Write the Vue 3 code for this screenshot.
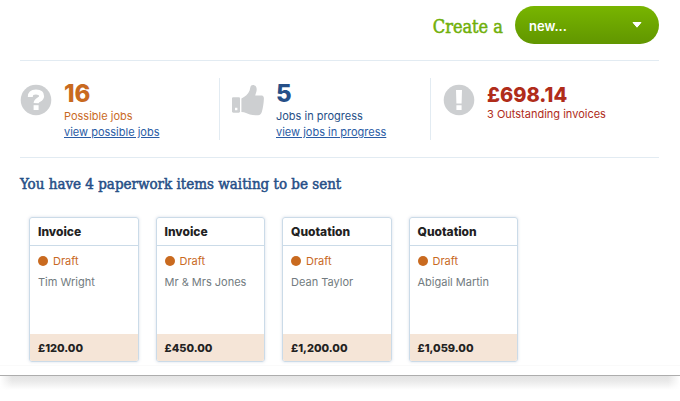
<script setup>
import { ref } from 'vue'

const selected = ref('new')

const stats = [
  { icon: 'question', tone: 'orange', value: '16', label: 'Possible jobs', link: 'view possible jobs' },
  { icon: 'thumb', tone: 'blue', value: '5', label: 'Jobs in progress', link: 'view jobs in progress' },
  { icon: 'alert', tone: 'red', value: '£698.14', label: '3 Outstanding invoices' },
]

const items = [
  { type: 'Invoice', status: 'Draft', client: 'Tim Wright', amount: '£120.00' },
  { type: 'Invoice', status: 'Draft', client: 'Mr & Mrs Jones', amount: '£450.00' },
  { type: 'Quotation', status: 'Draft', client: 'Dean Taylor', amount: '£1,200.00' },
  { type: 'Quotation', status: 'Draft', client: 'Abigail Martin', amount: '£1,059.00' },
]
</script>

<template>
  <main class="panel">
    <header class="create">
      <label class="create-label" for="create-type">Create a</label>
      <div class="picker">
        <select id="create-type" v-model="selected" class="picker-select">
          <option value="new">new...</option>
          <option value="invoice">Invoice</option>
          <option value="quotation">Quotation</option>
        </select>
        <svg class="picker-arrow" viewBox="0 0 10 6" aria-hidden="true">
          <path d="M1 0.5h8L5 5.2z" fill="#fff" stroke="#fff" stroke-linejoin="round" />
        </svg>
      </div>
    </header>

    <section class="stats">
      <article v-for="stat in stats" :key="stat.label" class="stat" :class="[stat.tone, stat.icon]">
        <svg v-if="stat.icon === 'question'" class="icon" viewBox="0 0 32 32" aria-hidden="true">
          <circle cx="16" cy="16" r="15.3" fill="#cdcfd1" />
          <path d="M10.3 13C10.3 9 12.6 8 16 8s5.600 1.300 5.600 4.200c0 3.700-5.300 3.200-5.500 7" fill="none" stroke="#fff" stroke-width="5" />
          <path d="M13.6 21.2h5v4.8h-5z" fill="#fff" />
        </svg>
        <svg v-else-if="stat.icon === 'thumb'" class="icon" viewBox="0 0 32 32" aria-hidden="true">
          <path d="M1.4 13.2h5.4c.7 0 1.2.5 1.2 1.2v13.2c0 .7-.5 1.2-1.2 1.2H1.4c-.8 0-1.4-.5-1.4-1.2V14.4c0-.7.6-1.2 1.4-1.2zM3 23.8v2.4h2.400v-2.400z" fill="#cdcfd1" fill-rule="evenodd" />
          <path d="M9.4 14.6c3.6-1.7 6.9-4.5 8.2-8.1.7-2 .5-3.8 1.6-5C21 0 24.5 1.3 24.7 5c.1 2.5-1 4.7-1.5 6.6h6.5c1.7.2 2.3 1.6 2.2 3.2-.2 4.2-.8 9-2.1 13.1-.6 2-1.7 3.1-3.7 3.3-2.7.2-5.7.1-8.2-.6-2.6-.8-4.8-2.5-8.500-2.600z" fill="#cdcfd1" />
        </svg>
        <svg v-else class="icon" viewBox="0 0 32 32" aria-hidden="true">
          <circle cx="16" cy="16" r="15.3" fill="#cdcfd1" />
          <path d="M13 6h6l-.4 13.6h-5.200zM13.400 21.200h5.200v4.800h-5.200z" fill="#fff" />
        </svg>
        <div class="stat-text">
          <strong class="value">{{ stat.value }}</strong>
          <span class="caption">{{ stat.label }}</span>
          <a v-if="stat.link" class="link" href="#">{{ stat.link }}</a>
        </div>
      </article>
    </section>

    <section class="paperwork">
      <h2 class="title">You have 4 paperwork items waiting to be sent</h2>
      <div class="cards">
        <article v-for="item in items" :key="item.client" class="card">
          <h3 class="card-title">{{ item.type }}</h3>
          <div class="card-body">
            <span class="status"><i class="dot"></i>{{ item.status }}</span>
            <span class="client">{{ item.client }}</span>
          </div>
          <strong class="amount">{{ item.amount }}</strong>
        </article>
      </div>
    </section>
    <div class="panel-foot"></div>
  </main>
  <div class="panel-shadow"></div>
</template>

<style>
body {
  background: #fff;
}
</style>

<style scoped>
* {
  box-sizing: border-box;
}

.panel {
  font-family: Inter, "Liberation Sans", sans-serif;
  font-size: 11px;
  line-height: 16px;
  background: #fff;
  border-bottom: 1px solid #adadad;
}

.panel-shadow {
  height: 14px;
  background:
    linear-gradient(to right, #fff, transparent 12px calc(100% - 12px), #fff),
    linear-gradient(#e4e4e4, #e9e9e9 35%, #fff);
}

.create {
  display: flex;
  align-items: center;
  justify-content: flex-end;
  gap: 12px;
  margin: 0 21px 0 20px;
  padding: 6px 0 16px;
  border-bottom: 1px solid #e2ebf2;
}

.create-label {
  font-family: "DejaVu Serif Condensed", "DejaVu Serif", serif;
  font-size: 18px;
  line-height: 24px;
  padding-top: 4px;
  color: #70b00a;
  -webkit-text-stroke: 0.5px #70b00a;
}

.picker {
  display: grid;
  align-items: center;
  width: 144px;
}

.picker-select {
  grid-area: 1 / 1;
  width: 100%;
  height: 38px;
  padding: 2px 32px 0 14px;
  appearance: none;
  border: 0;
  border-radius: 19px;
  background: linear-gradient(#78b500, #619600);
  color: #fff;
  font: 600 13px/20px Inter, "Liberation Sans", sans-serif;
}

.picker-arrow {
  grid-area: 1 / 1;
  justify-self: end;
  width: 10px;
  height: 6px;
  margin-right: 17px;
  pointer-events: none;
}

.stats {
  display: grid;
  grid-template-columns: 199fr 211fr 229fr;
  margin: 0 21px 0 20px;
  padding: 17px 0;
  border-bottom: 1px solid #e2ebf2;
}

.stat {
  display: flex;
  gap: 12px;
  min-height: 61px;
}

.stat + .stat {
  padding-left: 12px;
  border-left: 1px solid #e2ebf2;
}

.icon {
  flex: none;
  width: 32px;
  height: 32px;
  margin-top: 6px;
}

.stat-text {
  display: flex;
  flex-direction: column;
  align-items: flex-start;
}

.value {
  height: 30px;
  font-size: 24px;
  line-height: 32px;
  font-weight: 800;
}

.alert .value {
  height: 28px;
  font-size: 20px;
  line-height: 34px;
}

.orange {
  color: #c96a1f;
}

.blue {
  color: #264f87;
}

.red {
  color: #b02c1a;
}

.link {
  color: #2a5ca5;
}

.title {
  margin: 0;
  padding: 16px 20px 0;
  font-family: "DejaVu Serif Condensed", "DejaVu Serif", serif;
  font-size: 15px;
  line-height: 20px;
  font-weight: 400;
  color: #264f87;
  -webkit-text-stroke: 0.5px #264f87;
}

.cards {
  display: grid;
  grid-template-columns: repeat(4, 1fr);
  gap: 17px;
  max-width: 489px;
  margin: 23px 29px 0;
}

.card {
  display: flex;
  flex-direction: column;
  border: 1px solid #cbdbe8;
  border-radius: 3px;
  box-shadow: 0 0 3px rgba(90, 120, 160, 0.25);
  overflow: hidden;
}

.card-title {
  margin: 0;
  padding: 6px 8px 5px;
  border-bottom: 1px solid #cbdbe8;
  font-size: 12px;
  line-height: 16px;
  font-weight: 800;
  color: #222;
}

.card-body {
  display: flex;
  flex-direction: column;
  gap: 5px;
  min-height: 88px;
  padding: 7px 8px;
}

.status {
  display: flex;
  align-items: center;
  gap: 5px;
  color: #c96a1f;
}

.dot {
  width: 10px;
  height: 10px;
  border-radius: 50%;
  background: #c96a1f;
}

.client {
  color: #727b80;
}

.amount {
  padding: 6px 8px 5px;
  background: #f5e5d7;
  color: #222;
  font-weight: 800;
}

.panel-foot {
  margin-top: 3px;
  height: 10px;
  border-top: 1px solid #fafafa;
}
</style>
